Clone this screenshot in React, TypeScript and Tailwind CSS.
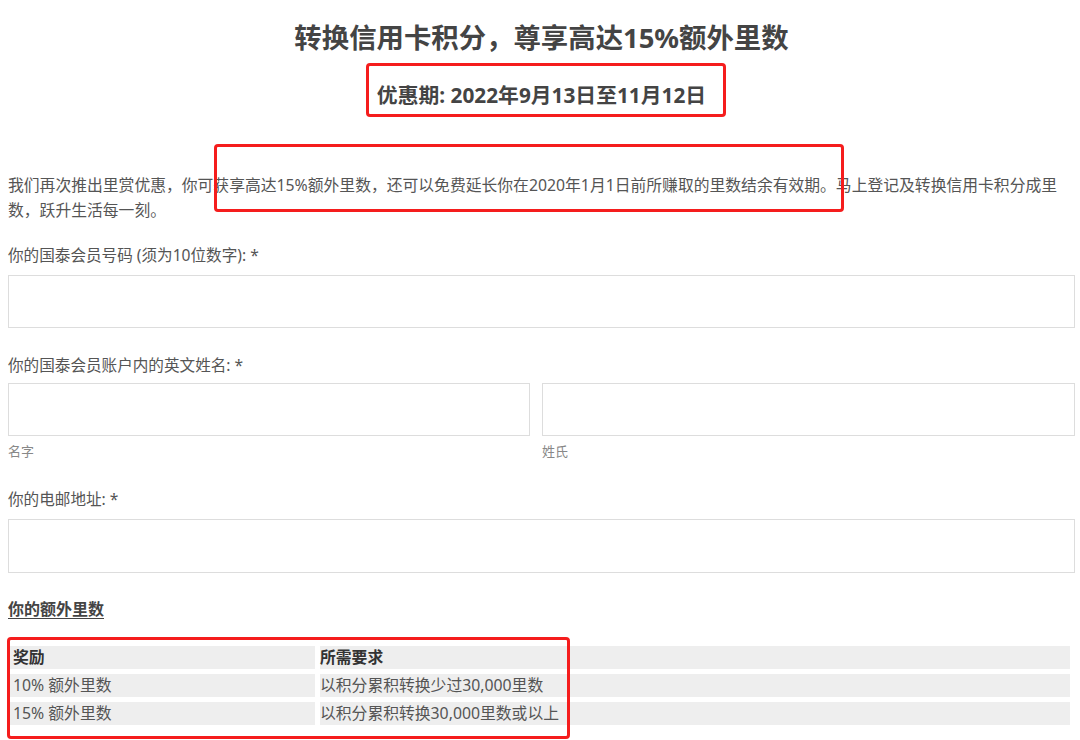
const font = "font-['Noto_Sans','Noto_Sans_CJK_SC',sans-serif]";

function Field({ className = "" }: { className?: string }) {
  return <div className={`border border-[#dddddd] bg-white ${className}`} />;
}

function RedBox({ className }: { className: string }) {
  return <div className={`pointer-events-none absolute rounded-[4px] border-[3px] border-[#f51d1d] ${className}`} />;
}

const rows = [
  { reward: "10% 额外里数", need: "以积分累积转换少过30,000里数" },
  { reward: "15% 额外里数", need: "以积分累积转换30,000里数或以上" },
];

export default function App() {
  return (
    <div className={`relative h-[740px] w-[1080px] overflow-hidden bg-white text-[#555555] ${font}`}>
      <div className="flex flex-col pl-[8px] pr-[5px] pt-[20px]">
        <h1 className="text-center text-[27.4px] font-bold leading-[36px] text-[#444444]">
          转换信用卡积分，尊享高达15%额外里数
        </h1>
        <h2 className="mt-[25px] text-center text-[20.8px] font-bold leading-[28px] text-[#444444]">
          优惠期: 2022年9月13日至11月12日
        </h2>

        <p className="mt-[64px] text-[15.8px] leading-[25px] text-[#555555]">
          我们再次推出里赏优惠，你可获享高达15%额外里数，还可以免费延长你在2020年1月1日前所赚取的里数结余有效期。马上登记及转换信用卡积分成里
          <br />
          数，跃升生活每一刻。
        </p>

        <label className="mt-[21px] text-[15.6px] leading-[22px]">你的国泰会员号码 (须为10位数字): *</label>
        <Field className="mt-[9px] h-[53px]" />

        <label className="mt-[26px] text-[15.6px] leading-[22px]">你的国泰会员账户内的英文姓名: *</label>
        <div className="mt-[7px] grid grid-cols-[522px_1fr] gap-x-[12px]">
          <div className="flex flex-col">
            <Field className="h-[53px]" />
            <span className="mt-[6px] text-[13px] leading-[18px] text-[#888888]">名字</span>
          </div>
          <div className="flex flex-col">
            <Field className="h-[53px]" />
            <span className="mt-[6px] text-[13px] leading-[18px] text-[#888888]">姓氏</span>
          </div>
        </div>

        <label className="mt-[28px] text-[15.6px] leading-[22px]">你的电邮地址: *</label>
        <Field className="mt-[9px] h-[54px]" />

        <h3 className="mt-[24px] text-[16px] font-bold leading-[24px] text-[#444444] underline underline-offset-[3px]">
          你的额外里数
        </h3>

        <div className="ml-[2px] mr-[5px] mt-[25px] grid grid-cols-[305px_1fr] gap-x-[5px] gap-y-[5px] text-[15.8px] leading-[23px]">
          <div className="bg-[#eeeeee] pl-[3px] font-bold text-[#333333]">奖励</div>
          <div className="bg-[#eeeeee] font-bold text-[#333333]">所需要求</div>
          {rows.map((r) => (
            <div key={r.reward} className="contents">
              <div className="bg-[#eeeeee] pl-[3px]">{r.reward}</div>
              <div className="bg-[#eeeeee]">{r.need}</div>
            </div>
          ))}
        </div>
      </div>

      <RedBox className="left-[366px] top-[63px] h-[54px] w-[360px]" />
      <RedBox className="left-[214px] top-[144px] h-[68px] w-[630px]" />
      <RedBox className="left-[7px] top-[637px] h-[102px] w-[563px]" />
    </div>
  );
}
